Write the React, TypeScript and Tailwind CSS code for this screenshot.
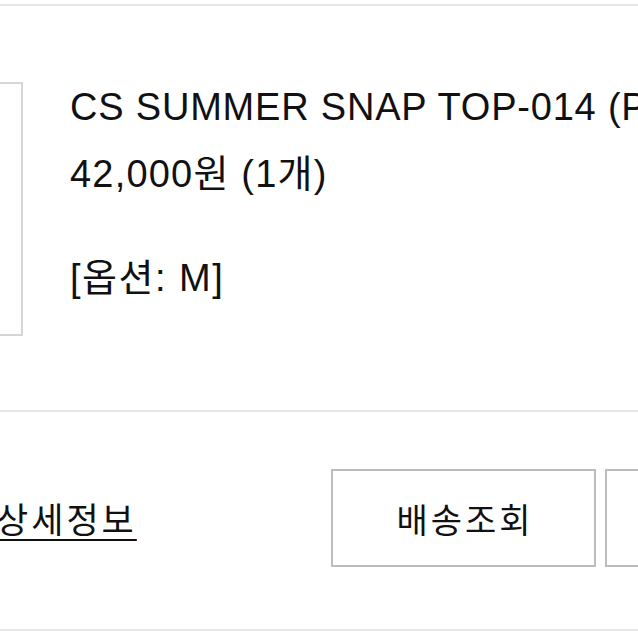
const item = {
  name: "CS SUMMER SNAP TOP-014 (PINK)",
  price: "42,000원 (1개)",
  option: "[옵션: M]",
};

export default function App() {
  return (
    <div className="w-[638px] h-[638px] overflow-hidden bg-white text-[#111] font-['Liberation_Sans','Noto_Sans_CJK_KR',sans-serif]">
      <div className="pt-[4px]">
        <div className="border-t-2 border-[#e6e6e6]">
          <div className="flex items-start pt-[76px] pb-[74px]">
            <div className="-ml-[207px] h-[254px] w-[230px] shrink-0 border-2 border-[#d6d6d6]" />
            <div className="ml-[47px] min-w-0 text-[38px] leading-[50px] tracking-[0.8px]">
              <p className="whitespace-nowrap">{item.name}</p>
              <p className="mt-[17px] whitespace-nowrap tracking-[1.2px]">{item.price}</p>
              <p className="mt-[54px] whitespace-nowrap tracking-[1.5px]">{item.option}</p>
            </div>
          </div>
        </div>

        <div className="border-t-2 border-[#e6e6e6]">
          <div className="flex items-center pt-[57px] pb-[62px]">
            <div className="w-[331px] shrink-0">
              <a href="#" className="-ml-[4px] inline-block font-['Noto_Sans_CJK_KR',sans-serif] text-[35px] leading-[44px] tracking-[3px] underline decoration-2 underline-offset-[6px]">
                상세정보
              </a>
            </div>
            <div className="flex shrink-0 gap-[9px]">
              <button className="flex h-[98px] w-[265px] items-center justify-center border-2 border-[#bdbdbd] bg-white pl-[3px] font-['Noto_Sans_CJK_KR',sans-serif] text-[34px] tracking-[3px]">
                배송조회
              </button>
              <button className="flex h-[98px] w-[265px] items-center justify-center border-2 border-[#bdbdbd] bg-white pl-[3px] font-['Noto_Sans_CJK_KR',sans-serif] text-[34px] tracking-[3px]">
                구매확정
              </button>
            </div>
          </div>
        </div>
        <div className="border-t-2 border-[#e6e6e6]" />
      </div>
    </div>
  );
}
